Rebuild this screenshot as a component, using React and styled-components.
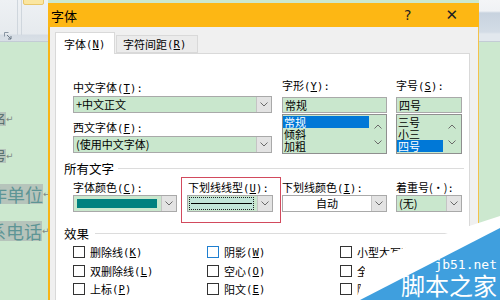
import React from 'react';
import styled, { createGlobalStyle } from 'styled-components';

const Global = createGlobalStyle`
  html, body { margin: 0; padding: 0; width: 500px; height: 300px; overflow: hidden; background: #cce8cf; }
  body { font-family: "Noto Sans CJK SC", "Noto Sans", sans-serif; color: #000; }
  * { box-sizing: border-box; }
`;

const Page = styled.div`
  position: relative;
  width: 500px;
  height: 300px;
  overflow: hidden;
  display: grid;
  grid-template-columns: 48px 431px 21px;
  background: #cce8cf;
`;

/* ---------- Word background ---------- */
const LeftPane = styled.div`
  display: flex;
  flex-direction: column;
  overflow: hidden;
`;
const Ribbon = styled.div`
  height: 42px;
  display: flex;
  align-items: flex-start;
  background: linear-gradient(#eef1f4 0px, #e6eaee 34px, #d5dce4 35px, #d9e0e7 41px);
  border-bottom: 1px solid #c3ccd5;
`;
const LauncherCell = styled.div`
  width: 17px;
  padding: 21px 0 0 4px;
`;
const RibbonSep = styled.div`
  width: 1px;
  height: 35px;
  background: #cfd6dd;
  margin-right: ${p => p.$mr || 0}px;
`;
const YellowBtn = styled.div`
  width: 21px;
  height: 6px;
  margin-top: -1px;
  background: #fbe6a0;
  border: 1px solid #e9c76a;
  border-radius: 0 0 2px 2px;
`;
const Doc = styled.div`
  display: flex;
  flex-direction: column;
  align-items: flex-start;
  padding-top: 70px;
`;
const DocLine = styled.div`
  display: flex;
  align-items: center;
  white-space: nowrap;
  margin-top: ${p => p.$mt}px;
  margin-left: ${p => p.$ml}px;
  font-size: ${p => p.$fs}px;
  line-height: ${p => p.$lh}px;
  color: ${p => p.$color};
`;
const Hilite = styled.span`
  background: #b6c4bb;
`;
const Ret = styled.span`
  color: #7e8a86;
  font-size: 9px;
  font-family: "DejaVu Sans", sans-serif;
`;
const RightStrip = styled.div`
  display: flex;
  flex-direction: column;
`;
const RightRibbon = styled.div`
  height: 42px;
  background: linear-gradient(#f4f5f7 0px, #f0f2f5 11px, #c8d3df 13px, #d3dce6 32px, #e2e8ee 34px, #e2e8ee 41px);
  border-bottom: 1px solid #c3ccd5;
`;

/* ---------- Dialog ---------- */
const Dialog = styled.div`
  margin-top: 3px;
  height: 320px;
  display: flex;
  flex-direction: column;
  background: #f0f0f0;
  border-left: 2px solid #f7b517;
  border-right: 1px solid #f3c24a;
`;
const TitleBar = styled.div`
  height: 24px;
  margin-left: -2px;
  margin-right: -1px;
  background: #fdb714;
  display: flex;
  align-items: center;
  padding: 0 21px 0 3px;
  font-size: 13px;
`;
const TitleText = styled.div`
  flex: 1;
`;
const TitleBtn = styled.div`
  font-size: ${p => p.$fs}px;
  margin-left: ${p => p.$ml || 0}px;
  font-family: "DejaVu Sans", sans-serif;
  color: #222;
  line-height: 1;
`;
const Body = styled.div`
  flex: 1;
  display: flex;
  flex-direction: column;
  padding: 5px 8px 0 5px;
`;
const Tabs = styled.div`
  display: flex;
  align-items: flex-end;
  height: 22px;
  position: relative;
  z-index: 1;
  margin-bottom: -1px;
`;
const Tab = styled.div`
  height: ${p => (p.$active ? 22 : 18)}px;
  width: ${p => p.$w}px;
  padding-left: ${p => p.$pl}px;
  display: flex;
  align-items: center;
  font-size: 11px;
  background: ${p => (p.$active ? '#ffffff' : '#ebebeb')};
  border: 1px solid #d9d9d9;
  border-bottom: ${p => (p.$active ? 'none' : '1px solid #d9d9d9')};
  margin-left: ${p => (p.$active ? 0 : 1)}px;
  margin-bottom: ${p => (p.$active ? 0 : 1)}px;
`;
const Panel = styled.div`
  flex: 1;
  background: #fff;
  border: 1px solid #d9d9d9;
  border-bottom: none;
  padding: 24px 5px 0 8px;
  display: flex;
  flex-direction: column;
`;
const TopGrid = styled.div`
  display: flex;
  padding-left: 9px;
`;
const Col = styled.div`
  display: flex;
  flex-direction: column;
  width: ${p => p.$w}px;
  margin-left: ${p => p.$ml || 0}px;
`;
const Label = styled.div`
  font-size: 11px;
  line-height: 14px;
  height: 14px;
  white-space: nowrap;
  margin-top: ${p => p.$mt || 0}px;
  padding-left: ${p => p.$pl || 0}px;
`;
const Key = styled.span`
  font-family: "DejaVu Sans Mono", "Liberation Mono", monospace;
  font-size: 10.5px;
  letter-spacing: 0.2px;
  u { text-underline-offset: 1px; }
`;
const Combo = styled.div`
  display: flex;
  height: ${p => p.$h || 17}px;
  width: ${p => p.$w}px;
  margin-top: ${p => p.$mt || 0}px;
  border: 1px solid #a9a9a9;
  background: ${p => p.$bg || '#c9e7cd'};
`;
const ComboText = styled.div`
  flex: 1;
  font-size: 11px;
  line-height: 15px;
  padding-left: ${p => (p.$center ? 0 : 2)}px;
  text-align: ${p => (p.$center ? 'center' : 'left')};
  white-space: nowrap;
  overflow: hidden;
`;
const DropBtn = styled.div`
  width: 15px;
  display: flex;
  align-items: center;
  justify-content: center;
  background: #e3e3e3;
  border-left: 1px solid #c4c4c4;
`;
const ColorFill = styled.div`
  flex: 1;
  margin: 3px 4px 3px 3px;
  background: #00817f;
`;
const LineFill = styled.div`
  flex: 1;
  margin: 1px 3px 1px 1px;
  border: 1px dotted #222;
  background: #c2e5d9;
  display: flex;
  align-items: center;
  padding: 0 1px;
`;
const LineSample = styled.div`
  flex: 1;
  height: 1px;
  background: #000;
`;
const ListBox = styled.div`
  display: flex;
  height: 40px;
  width: ${p => p.$w}px;
  margin-top: 1px;
  border: 1px solid #8f8f8f;
  background: #c9e7cd;
`;
const ListItems = styled.div`
  width: ${p => p.$w}px;
  padding-top: 1px;
  display: flex;
  flex-direction: column;
`;
const ListItem = styled.div`
  height: 12px;
  line-height: 12px;
  font-size: 11px;
  padding-left: 1px;
  background: ${p => (p.$sel ? '#0078d7' : 'transparent')};
  color: ${p => (p.$sel ? '#fff' : '#000')};
`;
const ScrollCol = styled.div`
  flex: 1;
  display: flex;
  flex-direction: column;
  align-items: center;
  justify-content: space-between;
  padding: 9px 0 8px;
`;
const Section = styled.div`
  display: flex;
  align-items: center;
  margin-top: ${p => p.$mt}px;
  height: 16px;
  font-size: 12.5px;
  line-height: 16px;
`;
const SectionLine = styled.div`
  flex: 1;
  height: 1px;
  margin: ${p => p.$lm || '0 0 1px 4px'};
  background: #dcdcdc;
`;
const Row2 = styled.div`
  display: flex;
  align-items: flex-start;
  padding-left: 9px;
`;
const Field = styled.div`
  display: flex;
  flex-direction: column;
  width: ${p => p.$w}px;
  margin-left: ${p => p.$ml || 0}px;
  padding-top: 3px;
`;
const RedField = styled.div`
  display: flex;
  flex-direction: column;
  width: 100px;
  margin-left: 4px;
  padding: 2px 7px 10px 5px;
  border: 1px solid #d24a5d;
`;
const Checks = styled.div`
  display: grid;
  grid-template-columns: 134px 133px 1fr;
  grid-auto-rows: 18.5px;
  padding-left: 9px;
  margin-top: 1px;
`;
const CheckItem = styled.div`
  display: flex;
  align-items: center;
  font-size: 11px;
  white-space: nowrap;
`;
const Box = styled.div`
  width: 12px;
  height: 12px;
  border: 1px solid ${p => (p.$hover ? '#1f7fd0' : '#333')};
  background: #fff;
  margin-right: 5px;
`;

/* ---------- Watermark ---------- */
const Watermark = styled.div`
  position: absolute;
  right: 0;
  bottom: 0;
  width: 160px;
  height: 90px;
  pointer-events: none;
`;
const WmWhite = styled.div`
  position: absolute;
  inset: 0;
  background: #fff;
  clip-path: polygon(16px 90px, 22px 72px, 26px 54px, 68px 36px, 160px 6px, 160px 90px);
`;
const WmBlue = styled.div`
  position: absolute;
  inset: 0;
  background: #3f9fde;
  clip-path: polygon(20px 90px, 160px 18px, 160px 90px);
`;
const WmText = styled.div`
  position: absolute;
  right: 3px;
  bottom: 2px;
  display: flex;
  flex-direction: column;
  align-items: flex-end;
  color: #fff;
`;
const WmUrl = styled.div`
  font-family: "DejaVu Sans Mono", monospace;
  font-size: 13px;
  line-height: 14px;
`;
const WmName = styled.div`
  font-size: 24px;
  line-height: 26px;
`;

const Chevron = ({ up }) => (
  <svg width="8" height="5" viewBox="0 0 8 5">
    <polyline
      points={up ? '0.5,4.5 4,1 7.5,4.5' : '0.5,0.5 4,4 7.5,0.5'}
      fill="none"
      stroke="#6a6a6a"
      strokeWidth="1"
    />
  </svg>
);

const Launcher = () => (
  <svg width="8" height="8" viewBox="0 0 8 8">
    <path d="M0.5 0.5h4M0.5 0.5v4" stroke="#8a96a3" fill="none" />
    <path d="M3 3l4 4M7 4v3H4" stroke="#6b7886" fill="none" />
  </svg>
);

const K = ({ k, colon = true }) => (
  <Key>
    (<u>{k}</u>){colon ? ':' : ''}
  </Key>
);

const Drop = () => (
  <DropBtn>
    <Chevron />
  </DropBtn>
);

const checks = [
  ['删除线', 'K'], ['阴影', 'W', true], ['小型大写字母', 'M'],
  ['双删除线', 'L'], ['空心', 'O'], ['全部大写字母', 'A'],
  ['上标', 'P'], ['阳文', 'E'], ['隐藏', 'H'],
  ['下标', 'B'], ['阴文', 'V'], ['', ''],
];

export default function App() {
  return (
    <>
      <Global />
      <Page>
        <LeftPane>
          <Ribbon>
            <LauncherCell>
              <Launcher />
            </LauncherCell>
            <RibbonSep $mr={3} />
            <RibbonSep $mr={1} />
            <YellowBtn />
          </Ribbon>
          <Doc>
            <DocLine $mt={0} $ml={-18} $fs={12} $lh={14} $color="#4c6464">
              <Hilite>姓名</Hilite><Ret>↵</Ret>
            </DocLine>
            <DocLine $mt={23} $ml={-18} $fs={12} $lh={14} $color="#4c6464">
              <Hilite>学号</Hilite><Ret>↵</Ret>
            </DocLine>
            <DocLine $mt={21} $ml={-29} $fs={18} $lh={20} $color="#5d9595">
              <Hilite>工作单位</Hilite><Ret>↵</Ret>
            </DocLine>
            <DocLine $mt={17} $ml={-30} $fs={18} $lh={20} $color="#5d9595">
              <Hilite>联系电话</Hilite><Ret>↵</Ret>
            </DocLine>
          </Doc>
        </LeftPane>

        <Dialog>
          <TitleBar>
            <TitleText>字体</TitleText>
            <TitleBtn $fs={14}>?</TitleBtn>
            <TitleBtn $fs={15} $ml={34}>✕</TitleBtn>
          </TitleBar>
          <Body>
            <Tabs>
              <Tab $active $w={60} $pl={8}>字体<K k="N" colon={false} /></Tab>
              <Tab $w={82} $pl={6}>字符间距<K k="R" colon={false} /></Tab>
            </Tabs>
            <Panel>
              <TopGrid>
                <Col $w={199}>
                  <Label $mt={2}>中文字体<K k="T" /></Label>
                  <Combo $w={199} $mt={2}>
                    <ComboText>+中文正文</ComboText>
                    <Drop />
                  </Combo>
                  <Label $mt={7}>西文字体<K k="F" /></Label>
                  <Combo $w={199} $mt={2}>
                    <ComboText>(使用中文字体)</ComboText>
                    <Drop />
                  </Combo>
                </Col>
                <Col $w={105} $ml={10}>
                  <Label>字形<K k="Y" /></Label>
                  <Combo $w={105} $h={16} $mt={5}>
                    <ComboText>常规</ComboText>
                  </Combo>
                  <ListBox $w={105}>
                    <ListItems $w={86}>
                      <ListItem $sel>常规</ListItem>
                      <ListItem>倾斜</ListItem>
                      <ListItem>加粗</ListItem>
                    </ListItems>
                    <ScrollCol>
                      <Chevron up />
                      <Chevron />
                    </ScrollCol>
                  </ListBox>
                </Col>
                <Col $w={66} $ml={9}>
                  <Label>字号<K k="S" /></Label>
                  <Combo $w={66} $h={16} $mt={5}>
                    <ComboText>四号</ComboText>
                  </Combo>
                  <ListBox $w={66}>
                    <ListItems $w={46}>
                      <ListItem>三号</ListItem>
                      <ListItem>小三</ListItem>
                      <ListItem $sel>四号</ListItem>
                    </ListItems>
                    <ScrollCol>
                      <Chevron up />
                      <Chevron />
                    </ScrollCol>
                  </ListBox>
                </Col>
              </TopGrid>

              <Section $mt={7}>
                所有文字
                <SectionLine />
              </Section>

              <Row2>
                <Field $w={104}>
                  <Label>字体颜色<K k="C" /></Label>
                  <Combo $w={104} $mt={1}>
                    <ColorFill />
                    <Drop />
                  </Combo>
                </Field>
                <RedField>
                  <Label $pl={1}>下划线线型<K k="U" /></Label>
                  <Combo $w={86} $mt={1}>
                    <LineFill>
                      <LineSample />
                    </LineFill>
                    <Drop />
                  </Combo>
                </RedField>
                <Field $w={105} $ml={1}>
                  <Label>下划线颜色<K k="I" /></Label>
                  <Combo $w={105} $mt={1} $bg="#ffffff">
                    <ComboText $center>自动</ComboText>
                    <Drop />
                  </Combo>
                </Field>
                <Field $w={66} $ml={9}>
                  <Label>着重号(·)<Key>:</Key></Label>
                  <Combo $w={66} $mt={1}>
                    <ComboText>(无)</ComboText>
                    <Drop />
                  </Combo>
                </Field>
              </Row2>

              <Section $mt={3}>
                效果
                <SectionLine $lm="0 0 2px 6px" />
              </Section>

              <Checks>
                {checks.map(([t, k, hover], i) => (
                  <CheckItem key={i}>
                    {t && (
                      <>
                        <Box $hover={hover} />
                        {t}
                        <K k={k} colon={false} />
                      </>
                    )}
                  </CheckItem>
                ))}
              </Checks>
            </Panel>
          </Body>
        </Dialog>

        <RightStrip>
          <RightRibbon />
        </RightStrip>

        <Watermark>
          <WmWhite />
          <WmBlue />
          <WmText>
            <WmUrl>jb51.net</WmUrl>
            <WmName>脚本之家</WmName>
          </WmText>
        </Watermark>
      </Page>
    </>
  );
}
